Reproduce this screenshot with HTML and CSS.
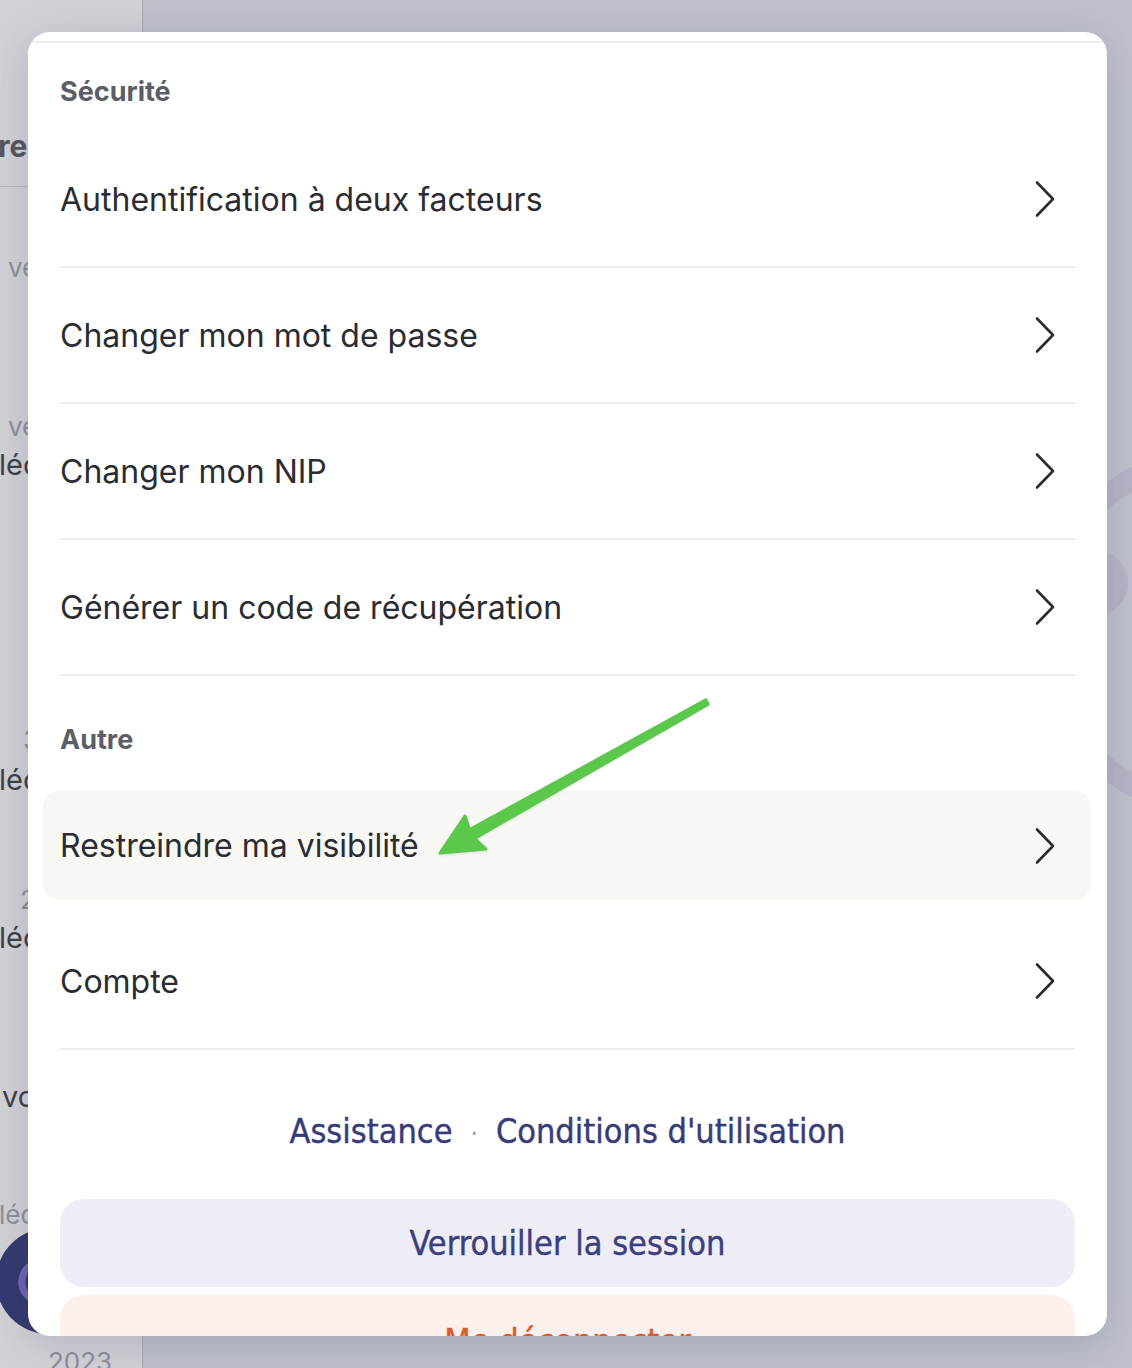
FILE: index.html
```html
<!DOCTYPE html>
<html lang="fr">
<head>
<meta charset="utf-8">
<title>Paramètres</title>
<link rel="stylesheet" href="styles.css">
</head>
<body>
<div class="page">
  <aside class="sidebar">
    <div class="sb-head">rencontres</div>
    <div class="sb-muted sb-ve1">vendredi 12 mai</div>
    <div class="sb-muted sb-ve2">vendredi 5 mai</div>
    <div class="sb-dark sb-lec1">lécture du rapport</div>
    <div class="sb-muted sb-num sb-n3">3 mai</div>
    <div class="sb-dark sb-lec2">lécture du rapport</div>
    <div class="sb-muted sb-num sb-n2">2 mai</div>
    <div class="sb-dark sb-lec3">lécture du rapport</div>
    <div class="sb-dark sb-vo">vous avez</div>
    <div class="sb-muted sb-lec4">lécture</div>
    <div class="sb-muted sb-year">2023</div>
  </aside>
  <main class="main">
    <svg class="rings" width="260" height="420" viewBox="0 0 260 420" aria-hidden="true">
      <circle cx="175" cy="210" r="174" fill="none" stroke="#b4b5c6" stroke-width="22"/>
      <circle cx="55" cy="161" r="33" fill="#b4b5c6"/>
    </svg>
  </main>
</div>

<div class="fab" aria-hidden="true">
  <svg width="106" height="106" viewBox="0 0 106 106">
    <path d="M40 36 C26 38 22 56 30 66 C36 74 48 72 50 64" fill="none" stroke="#6f63b5" stroke-width="7" stroke-linecap="round"/>
  </svg>
</div>

<section class="sheet">
  <div class="sheet-body">
    <h2 class="section-title first">Sécurité</h2>
    <div class="row"><span>Authentification à deux facteurs</span><svg class="chev" width="22" height="38" viewBox="0 0 22 38"><path d="M3 2.5 L19 19 L3 35.5"/></svg></div>
    <div class="row"><span>Changer mon mot de passe</span><svg class="chev" width="22" height="38" viewBox="0 0 22 38"><path d="M3 2.5 L19 19 L3 35.5"/></svg></div>
    <div class="row"><span>Changer mon NIP</span><svg class="chev" width="22" height="38" viewBox="0 0 22 38"><path d="M3 2.5 L19 19 L3 35.5"/></svg></div>
    <div class="row"><span>Générer un code de récupération</span><svg class="chev" width="22" height="38" viewBox="0 0 22 38"><path d="M3 2.5 L19 19 L3 35.5"/></svg></div>

    <h2 class="section-title second">Autre</h2>
    <div class="row-wrap">
      <div class="row-inner"><span>Restreindre ma visibilité</span><svg class="chev" width="22" height="38" viewBox="0 0 22 38"><path d="M3 2.5 L19 19 L3 35.5"/></svg></div>
    </div>
    <div class="row"><span>Compte</span><svg class="chev" width="22" height="38" viewBox="0 0 22 38"><path d="M3 2.5 L19 19 L3 35.5"/></svg></div>

    <div class="links">
      <a class="link" href="#">Assistance</a><span class="dot">·</span><a class="link" href="#">Conditions d'utilisation</a>
    </div>

    <button class="btn btn-lock" type="button">Verrouiller la session</button>
    <button class="btn btn-out" type="button">Me déconnecter</button>
  </div>
</section>

<svg class="arrow" width="1132" height="1368" viewBox="0 0 1132 1368" aria-hidden="true">
  <polygon points="705.8,699.8 469.6,829.6 465,816 440,853 486,849 474.5,838.4 708.2,704.2" fill="#5bc84b" stroke="#5bc84b" stroke-width="3" stroke-linejoin="round"/>
</svg>
</body>
</html>
```

FILE: styles.css
```css
* { box-sizing: border-box; }

html, body {
  margin: 0;
  padding: 0;
}

body {
  width: 1132px;
  height: 1368px;
  overflow: hidden;
  position: relative;
  background: #bfc1cd;
  font-family: Inter, "Noto Sans", "DejaVu Sans", sans-serif;
}

.page {
  display: flex;
  height: 1368px;
}

.sidebar {
  width: 143px;
  flex: none;
  background: #d1d2d7;
  border-right: 1px solid #a8a9b2;
  white-space: nowrap;
  overflow: hidden;
  font-size: 26px;
  line-height: 34px;
}

.sb-head {
  padding-top: 128px;
  padding-bottom: 22px;
  line-height: 36px;
  font-size: 30px;
  font-weight: 700;
  color: #55575f;
  margin-left: -2px;
  border-bottom: 1px solid #b7b8c0;
}

.sb-muted { color: #8d8f98; }
.sb-dark { color: #3f4047; font-size: 29px; }

.sb-ve1 { margin-top: 64px; padding-left: 8px; }
.sb-ve2 { margin-top: 125px; padding-left: 8px; }
.sb-lec1 { margin-top: 4px; margin-left: -1px; }
.sb-n3 { margin-top: 241px; padding-left: 23px; }
.sb-lec2 { margin-top: 6px; margin-left: -1px; }
.sb-n2 { margin-top: 86px; padding-left: 20px; }
.sb-lec3 { margin-top: 4px; margin-left: -1px; }
.sb-vo { margin-top: 125px; padding-left: 2px; }
.sb-lec4 { margin-top: 84px; margin-left: -1px; }
.sb-year { margin-top: 113px; padding-left: 48px; }

.main {
  flex: 1;
  display: flex;
  justify-content: flex-end;
  align-items: flex-start;
  overflow: hidden;
}

.rings {
  margin-top: 422px;
  margin-right: -168px;
  flex: none;
}

.fab {
  position: absolute;
  left: -4px;
  top: 1228px;
  width: 106px;
  height: 106px;
  border-radius: 50%;
  background: #343a6f;
}

.sheet {
  position: absolute;
  left: 28px;
  top: 32px;
  width: 1079px;
  height: 1304px;
  background: #ffffff;
  border-radius: 22px;
  overflow: hidden;
  box-shadow: 0 8px 40px rgba(40, 42, 70, 0.18);
}

.sheet-body {
  margin-top: 9px;
  border-top: 2px solid #ededea;
  padding: 0 32px;
}

.section-title {
  margin: 0;
  font-size: 27px;
  line-height: 32px;
  font-weight: 700;
  color: #5b5e66;
}

.section-title.first { padding-top: 33px; margin-bottom: 24px; }
.section-title.second { padding-top: 48px; margin-bottom: 22px; }

.row {
  display: flex;
  align-items: center;
  justify-content: space-between;
  height: 136px;
  border-bottom: 2px solid #ececea;
  font-size: 32px;
  color: #2a2c31;
}

.row-wrap {
  height: 136px;
  padding: 13px 0 14px;
}

.row-inner {
  height: 100%;
  display: flex;
  align-items: center;
  justify-content: space-between;
  margin: 0 -16px 0 -17px;
  padding: 0 16px 0 17px;
  background: #f7f7f3;
  border-radius: 16px;
  font-size: 32px;
  color: #2a2c31;
}

.chev {
  flex: none;
  margin-right: 19px;
}

.chev path {
  fill: none;
  stroke: #2b2b2e;
  stroke-width: 2.6;
  stroke-linecap: round;
  stroke-linejoin: round;
}

.links {
  height: 149px;
  padding-top: 64px;
  text-align: center;
  font-family: "Liberation Sans Narrow", "DejaVu Sans Condensed", "Roboto", sans-serif;
  font-stretch: condensed;
  font-size: 34px;
  line-height: 34px;
}

.link {
  color: #373c77;
  text-decoration: none;
  -webkit-text-stroke: 0.4px #373c77;
}

.dot {
  display: inline-block;
  margin: 0 18px;
  color: #9c9db0;
  font-size: 26px;
}

.btn {
  display: flex;
  align-items: center;
  justify-content: center;
  width: 100%;
  height: 88px;
  border: 0;
  border-radius: 24px;
  font-family: "Liberation Sans Narrow", "DejaVu Sans Condensed", "Roboto", sans-serif;
  font-stretch: condensed;
  font-size: 34px;
  padding: 0;
  -webkit-text-stroke: 0.4px currentColor;
}

.btn-lock {
  background: #eeedf6;
  color: #3a3f7d;
}

.btn-out {
  margin-top: 8px;
  background: #fcf0ec;
  color: #d95a2c;
  align-items: flex-start;
  padding-top: 26px;
}

.arrow {
  position: absolute;
  left: 0;
  top: 0;
  pointer-events: none;
  filter: drop-shadow(0 1px 1px rgba(0, 0, 0, 0.12));
}
```
